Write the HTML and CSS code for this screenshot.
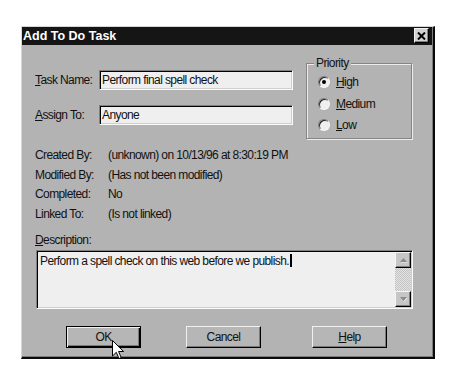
FILE: index.html
```html
<!DOCTYPE html>
<html>
<head>
<meta charset="utf-8">
<link rel="stylesheet" href="styles.css">
</head>
<body>
<div class="page">
  <div class="dialog">
    <div class="titlebar">
      <span class="title">Add To Do Task</span>
      <span class="close">
        <svg width="9" height="8" viewBox="0 0 9 8"><path d="M1 0.5 L8 7.5 M8 0.5 L1 7.5" stroke="#000" stroke-width="2" fill="none"/></svg>
      </span>
    </div>
    <div class="body">
      <div class="top">
        <div class="fields">
          <div class="field"><span class="lbl"><u>T</u>ask Name:</span><div class="input">Perform final spell check</div></div>
          <div class="field"><span class="lbl"><u>A</u>ssign To:</span><div class="input">Anyone</div></div>
        </div>
        <fieldset class="priority">
          <legend>Priority</legend>
          <div class="radio"><span class="rb checked"></span><span><u>H</u>igh</span></div>
          <div class="radio"><span class="rb"></span><span><u>M</u>edium</span></div>
          <div class="radio"><span class="rb"></span><span><u>L</u>ow</span></div>
        </fieldset>
      </div>
      <div class="info">
        <div class="row"><span class="k">Created By:</span><span>(unknown) on 10/13/96 at 8:30:19 PM</span></div>
        <div class="row"><span class="k">Modified By:</span><span>(Has not been modified)</span></div>
        <div class="row"><span class="k">Completed:</span><span>No</span></div>
        <div class="row"><span class="k">Linked To:</span><span>(Is not linked)</span></div>
      </div>
      <div class="desc-label"><u>D</u>escription:</div>
      <div class="textarea">
        <div class="text">Perform a spell check on this web before we publish.<span class="caret"></span></div>
        <div class="scroll">
          <div class="sbtn"><svg width="7" height="5" viewBox="0 0 7 5"><path d="M3.5 0 L7 4 L0 4 Z" fill="#8c8c8c"/><path d="M1 5 L7 5" stroke="#f4f4f4" stroke-width="1"/></svg></div>
          <div class="track"></div>
          <div class="sbtn"><svg width="7" height="5" viewBox="0 0 7 5"><path d="M0 0 L7 0 L3.5 4 Z" fill="#8c8c8c"/><path d="M4 4.5 L7 1" stroke="#f4f4f4" stroke-width="1"/></svg></div>
        </div>
      </div>
      <div class="buttons">
        <div class="btn default">OK</div>
        <div class="btn">Cancel</div>
        <div class="btn help"><span><u>H</u>elp</span></div>
      </div>
    </div>
  </div>
  <svg class="cursor" width="13" height="20" viewBox="0 0 13 20"><path d="M0.5 0.5 L0.5 16 L4.3 12.3 L7 18.6 L9.2 17.6 L6.6 11.5 L11.6 11.5 Z" fill="#fff" stroke="#000" stroke-width="1" stroke-linejoin="miter"/></svg>
</div>
</body>
</html>
```

FILE: styles.css
```css
body {
  margin: 0;
  background: #fff;
}

.page {
  position: relative;
  padding: 26px 0 0 21px;
}

.dialog {
  width: 414px;
  height: 333px;
  box-sizing: border-box;
  background: #b3b3b3;
  border-style: solid;
  border-width: 1px 2px 2px 1px;
  border-color: #d6d6d6 #0a0a0a #0a0a0a #d6d6d6;
  box-shadow: inset -1px -1px #7c7c7c;
  font-family: "Liberation Sans", Arial, sans-serif;
  font-size: 12px;
  letter-spacing: -0.6px;
  color: #111;
}

.titlebar {
  height: 18px;
  margin-right: 1px;
  background: #151515;
  display: flex;
  align-items: center;
  justify-content: space-between;
  padding: 0 3px 0 1px;
}

.title {
  font-family: "Liberation Sans", Arial, sans-serif;
  font-weight: bold;
  font-size: 12.5px;
  letter-spacing: 0;
  color: #fff;
}

.close {
  width: 15px;
  height: 15px;
  box-sizing: border-box;
  background: #d2d2d2;
  border: 1px solid;
  border-color: #f2f2f2 #000 #000 #f2f2f2;
  box-shadow: inset -1px -1px #808080;
  display: flex;
  align-items: center;
  justify-content: center;
  margin-top: -1px;
}

.body {
  padding-left: 13px;
}

.top {
  display: flex;
  align-items: flex-start;
}

.fields {
  width: 258px;
  margin-top: 25px;
}

.field {
  display: flex;
  align-items: center;
  height: 20px;
}

.field + .field {
  margin-top: 15px;
}

.lbl {
  width: 64px;
  white-space: nowrap;
}

.input {
  width: 194px;
  height: 20px;
  box-sizing: border-box;
  background: #efefef;
  border: 1px solid;
  border-color: #808080 #fafafa #fafafa #808080;
  box-shadow: inset 1px 1px #000, inset -1px -1px #cfcfcf;
  line-height: 18px;
  padding-left: 2px;
}

.priority {
  margin: 10px 0 0 13px;
  width: 106px;
  min-width: 0;
  box-sizing: border-box;
  padding: 0.5px 0 2px 0;
  border: 1px solid #858585;
  box-shadow: 1px 1px #ececec, inset 1px 1px #ececec;
}

.priority legend {
  margin-left: 7px;
  padding: 0 2px;
  line-height: 16px;
  background: #b3b3b3;
}

.radio {
  display: flex;
  align-items: center;
  height: 21.5px;
  margin-left: 11px;
}

.rb {
  position: relative;
  width: 12px;
  height: 12px;
  margin-right: 6px;
  box-sizing: border-box;
  border-radius: 50%;
  background: #efefef;
  border: 1px solid;
  border-color: #7a7a7a #f6f6f6 #f6f6f6 #7a7a7a;
  box-shadow: inset 1px 1px #222;
}

.rb.checked::after {
  content: "";
  position: absolute;
  left: 3px;
  top: 3px;
  width: 4px;
  height: 4px;
  border-radius: 50%;
  background: #000;
}

.info {
  margin-top: 7px;
}

.row {
  display: flex;
  line-height: 19.5px;
}

.k {
  width: 73px;
}

.desc-label {
  margin-top: 8px;
  line-height: 16px;
}

.textarea {
  margin: 2px 0 0 1px;
  width: 377px;
  height: 59px;
  box-sizing: border-box;
  display: flex;
  background: #efefef;
  border: 1px solid;
  border-color: #808080 #fafafa #fafafa #808080;
  box-shadow: inset 1px 1px #000, inset -1px -1px #cfcfcf;
  padding: 1px;
}

.text {
  flex: 1;
  padding: 1px 0 0 2px;
  line-height: 16px;
}

.caret {
  display: inline-block;
  width: 2px;
  height: 13px;
  margin-left: 1px;
  vertical-align: -2px;
  background: #000;
}

.scroll {
  width: 16px;
  display: flex;
  flex-direction: column;
}

.sbtn {
  height: 16px;
  box-sizing: border-box;
  background: #c6c6c6;
  border: 1px solid;
  border-color: #f4f4f4 #000 #000 #f4f4f4;
  box-shadow: inset -1px -1px #808080;
  display: flex;
  align-items: center;
  justify-content: center;
}

.track {
  flex: 1;
  background: repeating-conic-gradient(#c2c2c2 0 25%, #e4e4e4 0 50%) 0 0 / 2px 2px;
}

.buttons {
  display: flex;
  margin-top: 17px;
  padding-left: 31px;
  gap: 45px;
}

.btn {
  width: 75px;
  height: 22px;
  box-sizing: border-box;
  display: flex;
  align-items: center;
  justify-content: center;
  background: #b6b6b6;
  border: 1px solid;
  border-color: #f0f0f0 #000 #000 #f0f0f0;
  box-shadow: inset -1px -1px #7a7a7a;
}

.btn.default {
  border-color: #000;
  box-shadow: inset 1px 1px #f0f0f0, inset -1px -1px #000, inset -2px -2px #7a7a7a;
}

.btn.help {
  margin-left: 6px;
}

.cursor {
  position: absolute;
  left: 112px;
  top: 340px;
}
```
